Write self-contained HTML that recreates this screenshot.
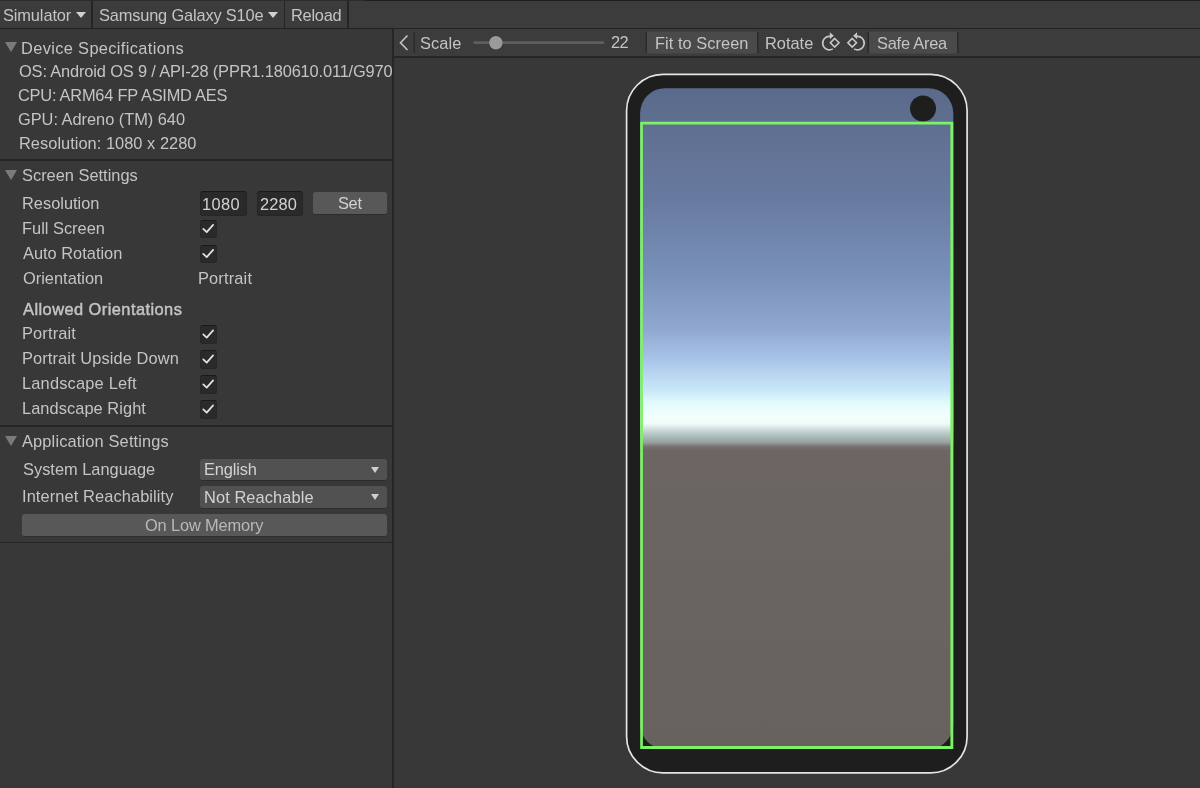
<!DOCTYPE html>
<html><head><meta charset="utf-8">
<style>
*{margin:0;padding:0;box-sizing:border-box}
html,body{width:1200px;height:788px;overflow:hidden;background:#383838;font-family:"Liberation Sans",sans-serif;color:#c4c4c4}
.a{position:absolute}
.t{position:absolute;white-space:nowrap;font-size:16.4px;line-height:16.4px;will-change:transform}
.tri{position:absolute;width:0;height:0;border-left:6px solid transparent;border-right:6px solid transparent;border-top:10px solid #7a7a7a}
.dd{position:absolute;width:0;height:0;border-left:4.5px solid transparent;border-right:4.5px solid transparent;border-top:6px solid #d0d0d0}
.cb{position:absolute;width:17.5px;height:18.5px;background:#2a2a2a;border-radius:3px;border:1px solid #262626;border-top:1.5px solid #1a1a1a}
.fld{position:absolute;background:#2a2a2a;border-radius:3px;border:1px solid #252525;border-top:1.5px solid #191919}
.btn{position:absolute;background:#585858;border-radius:3px;border-bottom:1px solid #2c2c2c}
.hsep{position:absolute;left:0;width:392px;height:1.6px;background:#262626}
</style></head><body>
<div class="a" style="left:0;top:0;width:1200px;height:28px;background:#3c3c3c"></div>
<div class="a" style="left:0;top:0;width:364px;height:1px;background:#2c2c2c"></div>
<div class="a" style="left:364px;top:0;width:836px;height:1.3px;background:#1f1f1f"></div>
<div class="a" style="left:0;top:27.6px;width:1200px;height:1.8px;background:#222222"></div>
<div class="a" style="left:91.4px;top:1px;width:1.6px;height:27px;background:#252525"></div>
<div class="a" style="left:283.5px;top:1px;width:1.6px;height:27px;background:#252525"></div>
<div class="a" style="left:347px;top:1px;width:1.6px;height:27px;background:#252525"></div>
<div class="t" style="left:3.30px;top:6.70px;letter-spacing:-0.120px">Simulator</div>
<div class="dd" style="left:76px;top:12px;border-left-width:5px;border-right-width:5px;border-top-width:6px"></div>
<div class="t" style="left:98.50px;top:6.70px;letter-spacing:-0.170px">Samsung Galaxy S10e</div>
<div class="dd" style="left:268px;top:12px;border-left-width:5px;border-right-width:5px;border-top-width:6px"></div>
<div class="t" style="left:290.80px;top:6.70px;letter-spacing:-0.270px">Reload</div>
<div class="a" style="left:392.3px;top:29px;width:2px;height:759px;background:#262626"></div>
<div class="tri" style="left:5.3px;top:42px"></div>
<div class="t" style="left:20.70px;top:39.50px;letter-spacing:0.350px">Device Specifications</div>
<div class="a" style="left:0;top:55px;width:392px;height:30px;overflow:hidden"><div class="t" style="left:18.50px;top:8.00px;letter-spacing:-0.150px">OS: Android OS 9 / API-28 (PPR1.180610.011/G970</div>
</div>
<div class="t" style="left:18.30px;top:86.50px;letter-spacing:-0.240px">CPU: ARM64 FP ASIMD AES</div>
<div class="t" style="left:18.30px;top:111.00px;letter-spacing:-0.030px">GPU: Adreno (TM) 640</div>
<div class="t" style="left:18.80px;top:134.50px;letter-spacing:0.030px">Resolution: 1080 x 2280</div>
<div class="hsep" style="top:159.4px"></div>
<div class="tri" style="left:5.3px;top:170px"></div>
<div class="t" style="left:21.70px;top:167.00px">Screen Settings</div>
<div class="t" style="left:21.70px;top:195.00px">Resolution</div>
<div class="fld" style="left:199.6px;top:191px;width:47.8px;height:24.5px"></div>
<div class="t" style="left:202.20px;top:195.50px;letter-spacing:0.380px;color:#d2d2d2">1080</div>
<div class="fld" style="left:256.5px;top:191px;width:46.7px;height:24.5px"></div>
<div class="t" style="left:260.00px;top:195.50px;letter-spacing:0.120px;color:#d2d2d2">2280</div>
<div class="btn" style="left:313.3px;top:192px;width:73.7px;height:23px"></div>
<div class="t" style="left:338.30px;top:195.00px;letter-spacing:-0.320px;color:#d2d2d2">Set</div>
<div class="t" style="left:21.70px;top:220.00px">Full Screen</div>
<div class="cb" style="left:199.6px;top:219.5px"></div>
<div class="t" style="left:22.70px;top:245.00px">Auto Rotation</div>
<div class="cb" style="left:199.6px;top:244.5px"></div>
<div class="t" style="left:22.70px;top:270.00px">Orientation</div>
<div class="t" style="left:198.30px;top:270.00px;letter-spacing:0.160px">Portrait</div>
<div class="t" style="left:22.50px;top:300.70px;letter-spacing:0.450px;-webkit-text-stroke:0.45px #c4c4c4">Allowed Orientations</div>
<div class="t" style="left:21.70px;top:325.00px;letter-spacing:0.150px">Portrait</div>
<div class="cb" style="left:199.6px;top:325px"></div>
<div class="t" style="left:21.70px;top:350.00px;letter-spacing:0.100px">Portrait Upside Down</div>
<div class="cb" style="left:199.6px;top:350px"></div>
<div class="t" style="left:21.70px;top:375.00px;letter-spacing:0.190px">Landscape Left</div>
<div class="cb" style="left:199.6px;top:375px"></div>
<div class="t" style="left:21.70px;top:400.00px;letter-spacing:0.060px">Landscape Right</div>
<div class="cb" style="left:199.6px;top:400px"></div>
<div class="hsep" style="top:425.3px"></div>
<div class="tri" style="left:5.3px;top:436px"></div>
<div class="t" style="left:21.70px;top:433.40px;letter-spacing:0.150px">Application Settings</div>
<div class="t" style="left:22.70px;top:460.70px">System Language</div>
<div class="btn" style="left:200.2px;top:458.8px;width:186.8px;height:22.4px;background:#515151"></div>
<div class="t" style="left:203.90px;top:461.00px;letter-spacing:-0.140px;color:#d2d2d2">English</div>
<div class="dd" style="left:371.3px;top:466.6px"></div>
<div class="t" style="left:21.70px;top:488.00px;letter-spacing:0.100px">Internet Reachability</div>
<div class="btn" style="left:200.2px;top:486.4px;width:186.8px;height:22.3px;background:#515151"></div>
<div class="t" style="left:204.20px;top:488.50px;letter-spacing:0.090px;color:#d2d2d2">Not Reachable</div>
<div class="dd" style="left:371.3px;top:494px"></div>
<div class="btn" style="left:22.3px;top:513.6px;width:364.7px;height:23.4px"></div>
<div class="t" style="left:145.00px;top:516.70px;letter-spacing:-0.150px;color:#b8b8b8">On Low Memory</div>
<div class="hsep" style="top:541.5px"></div>
<div class="a" style="left:394.2px;top:29px;width:806px;height:28px;background:#3c3c3c"></div>
<div class="a" style="left:394.2px;top:56px;width:806px;height:2px;background:#262626"></div>
<svg class="a" style="left:0;top:0" width="1200" height="788">
  <defs>
    <linearGradient id="sky" x1="0" y1="88" x2="0" y2="749" gradientUnits="userSpaceOnUse">
      <stop offset="0.0000" stop-color="#5a6a8a"/>
      <stop offset="0.1679" stop-color="#687aa0"/>
      <stop offset="0.2799" stop-color="#7890b8"/>
      <stop offset="0.3646" stop-color="#90a8d0"/>
      <stop offset="0.4115" stop-color="#a8c4e8"/>
      <stop offset="0.4307" stop-color="#b8d4f0"/>
      <stop offset="0.4576" stop-color="#c8e8f8"/>
      <stop offset="0.4750" stop-color="#e0fafc"/>
      <stop offset="0.4941" stop-color="#f0fffe"/>
      <stop offset="0.5076" stop-color="#f0fcf8"/>
      <stop offset="0.5159" stop-color="#d0e0e0"/>
      <stop offset="0.5257" stop-color="#b0c0c0"/>
      <stop offset="0.5363" stop-color="#98a0a0"/>
      <stop offset="0.5424" stop-color="#7a7272"/>
      <stop offset="0.5484" stop-color="#6c6664"/>
      <stop offset="0.5779" stop-color="#6c6562"/>
      <stop offset="0.6687" stop-color="#6b6561"/>
      <stop offset="1.0000" stop-color="#67625d"/>
    </linearGradient>
  </defs>
  <rect x="626.6" y="74.3" width="340.5" height="698.6" rx="36.5" ry="36.5" fill="#1e1e1e" stroke="#e4e4e4" stroke-width="1.7"/>
  <rect x="640.1" y="88.2" width="313.2" height="660.8" rx="25" ry="25" fill="url(#sky)"/>
  <circle cx="923" cy="108.5" r="13" fill="#1e1e1e"/>
  <path d="M640.2 121.7 H953.3 V749 H640.2 Z M642.9 124.5 V746 H950.4 V124.5 Z" fill="#7cf266" fill-rule="evenodd"/>
</svg>
<svg class="a" style="left:0;top:0;overflow:visible" width="1" height="1">
  <path d="M407.5 35.5 L400.5 42.8 L407.5 50" fill="none" stroke="#c4c4c4" stroke-width="1.6"/>
  <rect x="413.5" y="32" width="1.5" height="21" fill="#2a2a2a"/>
  <rect x="473.3" y="41.2" width="131" height="2.8" rx="1.4" fill="#5e5e5e"/>
  <circle cx="495.9" cy="42.75" r="7.2" fill="#303030" opacity="0.5"/>
  <circle cx="495.9" cy="42.75" r="6.8" fill="#9a9a9a"/>
  <rect x="645.5" y="32" width="1.5" height="21" fill="#2a2a2a"/>
  <rect x="647" y="31.8" width="110" height="21.7" fill="#4a4a4a"/>
  <rect x="757" y="32" width="1.5" height="21" fill="#2a2a2a"/>
  <rect x="867.5" y="32" width="1.5" height="21" fill="#2a2a2a"/>
  <rect x="869" y="31.8" width="88" height="21.7" fill="#4a4a4a"/>
  <rect x="957" y="32" width="1.5" height="21" fill="#2a2a2a"/>
  <g fill="none" stroke="#c8c8c8" stroke-width="1.6">
    <path d="M830.3 36.46 A6.7 6.7 0 1 0 832.8 48.85"/>
    <path d="M834.7 38.5 L839 42.8 L834.7 47.1 L830.4 42.8 Z"/>
    <path d="M852.2 38.5 L856.5 42.8 L852.2 47.1 L847.9 42.8 Z"/>
    <path d="M856.6 36.46 A6.7 6.7 0 1 1 854.1 48.85"/>
  </g>
  <path d="M829.8 32.3 L833.8 35.8 L829.8 39.3 Z" fill="#c8c8c8"/>
  <path d="M857.1 32.3 L853.1 35.8 L857.1 39.3 Z" fill="#c8c8c8"/>
  <path d="M203.3 228.9 L206.7 232.1 L213.1 224.9" fill="none" stroke="#e2e2e2" stroke-width="1.75" stroke-linecap="round" stroke-linejoin="round"/>
  <path d="M203.3 253.9 L206.7 257.1 L213.1 249.9" fill="none" stroke="#e2e2e2" stroke-width="1.75" stroke-linecap="round" stroke-linejoin="round"/>
  <path d="M203.3 334.4 L206.7 337.6 L213.1 330.4" fill="none" stroke="#e2e2e2" stroke-width="1.75" stroke-linecap="round" stroke-linejoin="round"/>
  <path d="M203.3 359.4 L206.7 362.6 L213.1 355.4" fill="none" stroke="#e2e2e2" stroke-width="1.75" stroke-linecap="round" stroke-linejoin="round"/>
  <path d="M203.3 384.4 L206.7 387.6 L213.1 380.4" fill="none" stroke="#e2e2e2" stroke-width="1.75" stroke-linecap="round" stroke-linejoin="round"/>
  <path d="M203.3 409.4 L206.7 412.6 L213.1 405.4" fill="none" stroke="#e2e2e2" stroke-width="1.75" stroke-linecap="round" stroke-linejoin="round"/>
</svg>
<div class="t" style="left:420.40px;top:34.50px;letter-spacing:0.080px">Scale</div>
<div class="t" style="left:611.00px;top:34.00px;letter-spacing:-0.500px">22</div>
<div class="t" style="left:654.70px;top:34.50px;letter-spacing:0.040px">Fit to Screen</div>
<div class="t" style="left:765.00px;top:34.50px">Rotate</div>
<div class="t" style="left:877.00px;top:34.50px;letter-spacing:-0.220px">Safe Area</div>
</body></html>
